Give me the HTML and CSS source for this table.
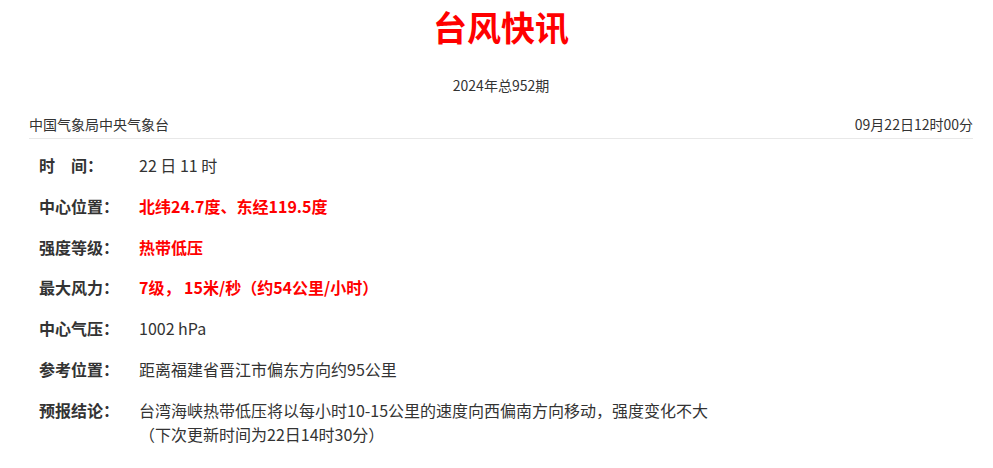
FILE: index.html
```html
<!DOCTYPE html>
<html lang="zh-CN">
<head>
<meta charset="utf-8">
<title>台风快讯</title>
<link rel="stylesheet" href="styles.css">
</head>
<body>
<div class="page">
  <h1 class="title">台风快讯</h1>
  <div class="issue">2024年总952期</div>
  <div class="meta">
    <span>中国气象局中央气象台</span>
    <span>09月22日12时00分</span>
  </div>
  <div class="rows">
    <div class="row"><div class="label">时　间：</div><div class="value">22 日 11 时</div></div>
    <div class="row"><div class="label">中心位置：</div><div class="value red">北纬24.7度、东经119.5度</div></div>
    <div class="row"><div class="label">强度等级：</div><div class="value red">热带低压</div></div>
    <div class="row"><div class="label">最大风力：</div><div class="value red">7级， 15米/秒（约54公里/小时）</div></div>
    <div class="row"><div class="label">中心气压：</div><div class="value">1002 hPa</div></div>
    <div class="row"><div class="label">参考位置：</div><div class="value">距离福建省晋江市偏东方向约95公里</div></div>
    <div class="row"><div class="label">预报结论：</div><div class="value">台湾海峡热带低压将以每小时10-15公里的速度向西偏南方向移动，强度变化不大<br>（下次更新时间为22日14时30分）</div></div>
  </div>
</div>
</body>
</html>
```

FILE: styles.css
```css
html, body {
  margin: 0;
  padding: 0;
  background: #fff;
}
body {
  font-family: "Noto Sans CJK SC", "Noto Sans", sans-serif;
  color: #333;
}
.page {
  margin: 0 20px 0 29px;
}
.title {
  margin: 7px 0 0;
  text-align: center;
  font-size: 34px;
  line-height: 40px;
  font-weight: bold;
  color: #ff0000;
}
.issue {
  margin-top: 28px;
  text-align: center;
  font-size: 14px;
  line-height: 20px;
}
.meta {
  margin-top: 19px;
  display: flex;
  justify-content: space-between;
  font-size: 14px;
  line-height: 20px;
  padding-bottom: 4px;
  border-bottom: 1px solid #e8e8e8;
}
.rows {
  margin-top: 14px;
  padding-left: 10px;
  display: flex;
  flex-direction: column;
  gap: 16.8px;
}
.row {
  display: flex;
  font-size: 16px;
  line-height: 24px;
}
.label {
  width: 100px;
  flex: none;
  font-weight: bold;
}
.value {
  flex: 1;
}
.red {
  color: #ff0000;
  font-weight: bold;
}
```
